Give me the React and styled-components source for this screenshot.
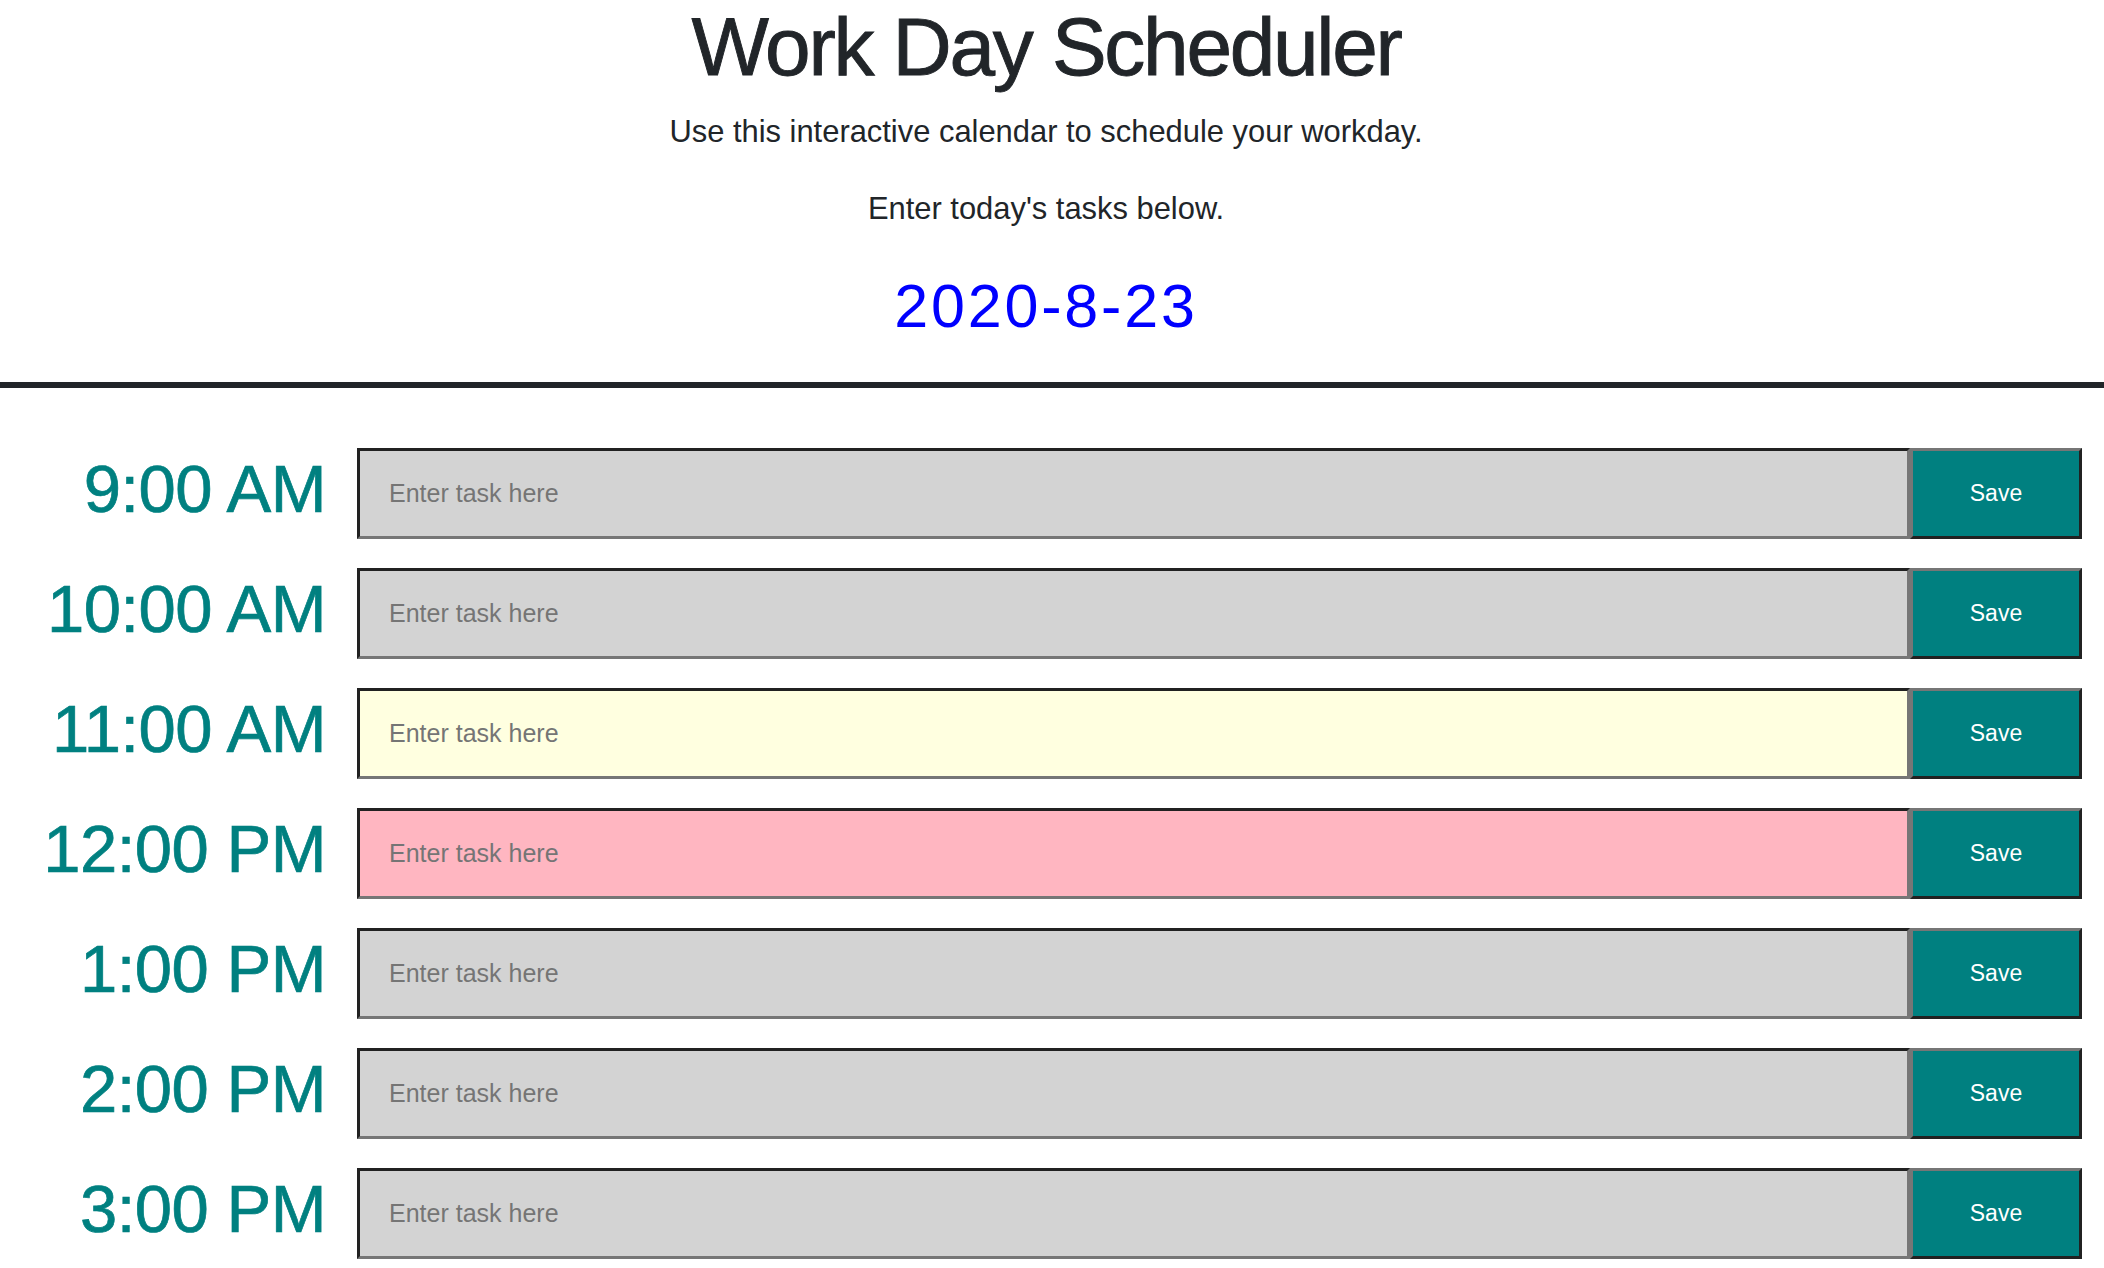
import React from "react";
import styled, { createGlobalStyle } from "styled-components";

const GlobalStyle = createGlobalStyle`
  html, body {
    margin: 0;
    padding: 0;
    background: #ffffff;
  }
  body {
    font-family: "Liberation Sans", Arial, sans-serif;
    color: #212529;
  }
`;

const hours = [
  { id: 9, label: "9:00 AM", tone: "past" },
  { id: 10, label: "10:00 AM", tone: "past" },
  { id: 11, label: "11:00 AM", tone: "present" },
  { id: 12, label: "12:00 PM", tone: "future" },
  { id: 13, label: "1:00 PM", tone: "past" },
  { id: 14, label: "2:00 PM", tone: "past" },
  { id: 15, label: "3:00 PM", tone: "past" },
];

const toneColors = {
  past: "#d3d3d3",
  present: "#ffffe0",
  future: "#ffb6c1",
};

function App() {
  return (
    <>
      <GlobalStyle />
      <Page>
        <Header>
          <Title>Work Day Scheduler</Title>
          <Lead>Use this interactive calendar to schedule your workday.</Lead>
          <Lead className="second">Enter today's tasks below.</Lead>
          <CurrentDay>2020-8-23</CurrentDay>
        </Header>
        <Divider />
        <Schedule>
          {hours.map((hour) => (
            <Row key={hour.id}>
              <Hour>{hour.label}</Hour>
              <Task tone={hour.tone} placeholder="Enter task here" />
              <SaveBtn>Save</SaveBtn>
            </Row>
          ))}
        </Schedule>
      </Page>
    </>
  );
}

const Page = styled.div`
  display: flex;
  flex-direction: column;
  width: 100%;
  min-height: 1268px;
`;

const Header = styled.header`
  display: flex;
  flex-direction: column;
  align-items: center;
  text-align: center;
  padding-right: 12px;
`;

const Title = styled.h1`
  margin: 0;
  font-size: 82px;
  font-weight: 400;
  line-height: 1.15;
  letter-spacing: -2.3px;
  color: #212529;
  -webkit-text-stroke: 0.9px #212529;
`;

const Lead = styled.p`
  margin: 16px 0 0;
  font-size: 30.9px;
  line-height: 1.45;
  color: #212529;

  &.second {
    margin-top: 32px;
  }
`;

const CurrentDay = styled.p`
  margin: 38px 0 0;
  font-size: 61px;
  line-height: 1.2;
  letter-spacing: 2.8px;
  color: #0000ff;
`;

const Divider = styled.hr`
  margin: 39px 0 0;
  border: 0;
  height: 6px;
  background: #212529;
`;

const Schedule = styled.section`
  display: flex;
  flex-direction: column;
  gap: 29px;
  margin-top: 60px;
  padding-right: 22px;
`;

const Row = styled.div`
  display: grid;
  grid-template-columns: 357px 1fr 172px;
  height: 91px;
`;

const Hour = styled.div`
  padding: 7px 31px 0 0;
  text-align: right;
  font-size: 67px;
  line-height: 1;
  letter-spacing: -0.5px;
  color: #008080;
  -webkit-text-stroke: 0.7px #008080;
  white-space: nowrap;
`;

const Task = styled.textarea`
  box-sizing: border-box;
  height: 91px;
  margin: 0;
  padding: 24px 29px 0;
  resize: none;
  outline: none;
  background: ${(p) => toneColors[p.tone]};
  border-style: solid;
  border-width: 3px;
  border-color: #212121 #767676 #767676 #212121;
  font-family: "Liberation Sans", Arial, sans-serif;
  font-size: 25px;
  line-height: 1.5;
  color: #212529;

  &::placeholder {
    color: #757575;
  }
`;

const SaveBtn = styled.button`
  box-sizing: border-box;
  height: 91px;
  margin: 0;
  padding: 0;
  background: #008080;
  border-style: solid;
  border-width: 3px;
  border-color: #767676 #212121 #212121 #767676;
  color: #ffffff;
  font-family: "Liberation Sans", Arial, sans-serif;
  font-size: 23px;
  cursor: pointer;
`;

export default App;
